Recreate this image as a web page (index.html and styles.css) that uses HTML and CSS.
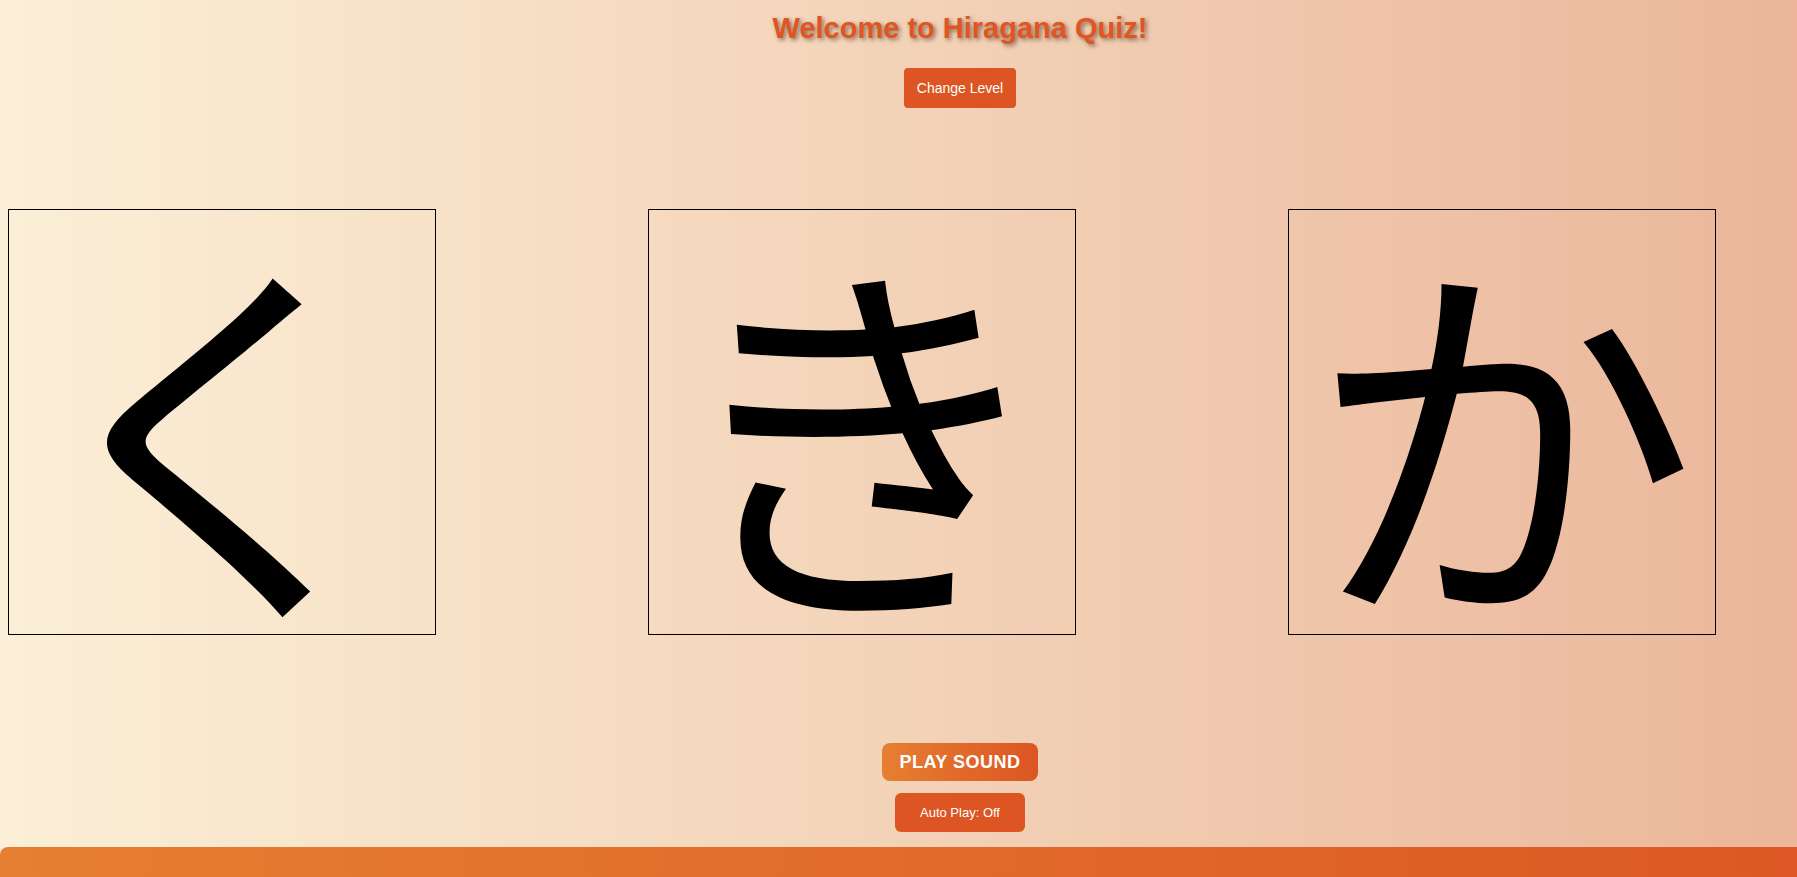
FILE: index.html
```html
<!DOCTYPE html>
<html lang="en">
<head>
<meta charset="utf-8">
<title>Hiragana Quiz</title>
<link rel="stylesheet" href="styles.css">
</head>
<body>
<div class="page">
  <h1 class="title">Welcome to Hiragana Quiz!</h1>
  <div class="top-controls">
    <button class="btn btn-level">Change Level</button>
  </div>
  <div class="cards">
    <div class="card"><span class="kana">く</span></div>
    <div class="card"><span class="kana">き</span></div>
    <div class="card"><span class="kana">か</span></div>
  </div>
  <div class="bottom-controls">
    <button class="btn btn-play">PLAY SOUND</button>
    <button class="btn btn-auto">Auto Play: Off</button>
  </div>
  <footer class="footer"></footer>
</div>
</body>
</html>
```

FILE: styles.css
```css
html, body {
  margin: 0;
  padding: 0;
  height: 100%;
  overflow: hidden;
}
body {
  background: linear-gradient(90deg, #fbefd7 0%, #f3d3b8 50%, #ebb69b 100%);
  font-family: "Liberation Sans", Arial, sans-serif;
}
.page {
  width: 1904px;
  padding: 8px 8px 0;
  display: flex;
  flex-direction: column;
  align-items: center;
}
.title {
  margin: 4px 0 0;
  font-size: 29px;
  font-weight: bold;
  line-height: 33px;
  color: #df5524;
  text-shadow: 2px 2px 4px rgba(70, 45, 25, 0.6);
}
.top-controls {
  margin-top: 23px;
}
.btn {
  border: none;
  color: #fff;
  font-family: "Liberation Sans", Arial, sans-serif;
  cursor: pointer;
}
.btn-level {
  width: 112px;
  height: 40px;
  background: #dc5523;
  border-radius: 4px;
  font-size: 14px;
}
.cards {
  align-self: stretch;
  margin-top: 101px;
  display: flex;
  gap: 212px;
}
.card {
  width: 426px;
  height: 424px;
  border: 1px solid #000;
  display: flex;
  align-items: center;
  justify-content: center;
}
.kana {
  font-family: "Noto Sans CJK JP", sans-serif;
  font-size: 390px;
  line-height: 1;
  color: #000;
}
.bottom-controls {
  margin-top: 108px;
  display: flex;
  flex-direction: column;
  align-items: center;
  gap: 12px;
}
.btn-play {
  width: 156px;
  height: 38px;
  border-radius: 8px;
  background: linear-gradient(90deg, #e67f31, #dc5523);
  font-size: 18px;
  font-weight: bold;
  letter-spacing: 0.5px;
}
.btn-auto {
  width: 130px;
  height: 39px;
  border-radius: 6px;
  background: #dc5523;
  font-size: 13px;
}
.footer {
  align-self: stretch;
  margin: 15px -8px 0;
  height: 30px;
  border-radius: 8px 8px 0 0;
  background: linear-gradient(90deg, #e67f31, #dc5523);
}
```
